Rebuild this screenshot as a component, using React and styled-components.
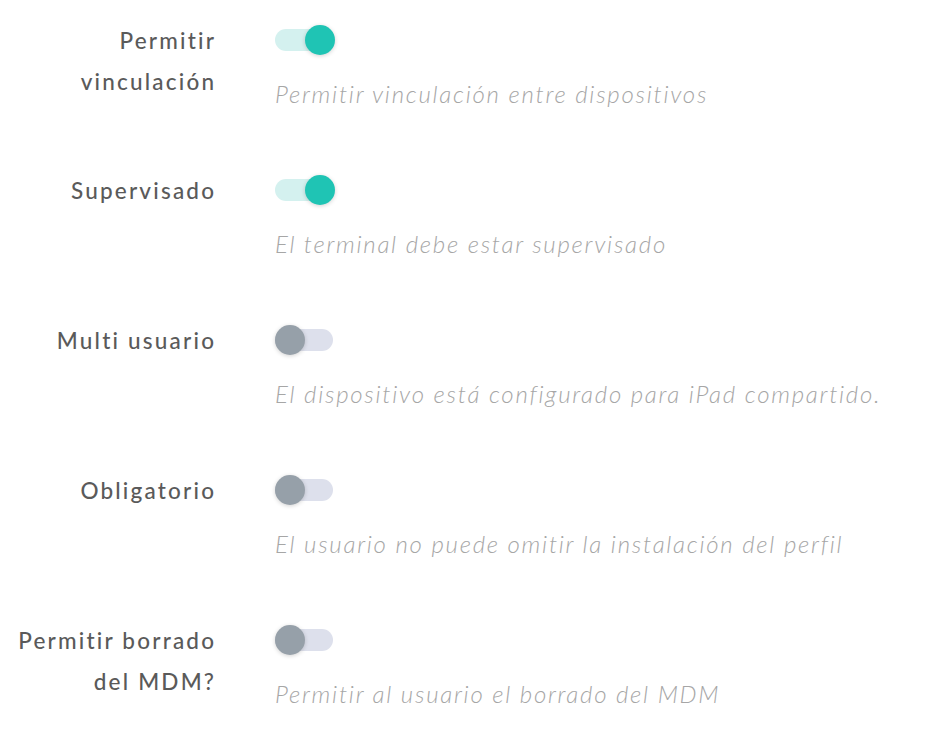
import React, { useState } from "react";
import styled, { createGlobalStyle } from "styled-components";

const Global = createGlobalStyle`
  html, body { margin: 0; padding: 0; background: #ffffff; }
  body { font-family: "Lato", "Noto Sans", sans-serif; }
`;

const Page = styled.div`
  display: flex;
  flex-direction: column;
  gap: 66.5px;
  padding-top: 25px;
  width: 926px;
  box-sizing: border-box;
`;

const Row = styled.div`
  display: grid;
  grid-template-columns: 214px auto;
  column-gap: 61px;
  align-items: start;
`;

const Label = styled.div`
  margin-top: -5.5px;
  margin-right: -2.2px;
  text-align: right;
  font-size: 22.5px;
  font-weight: 500;
  letter-spacing: 2.2px;
  line-height: 41px;
  color: #5a5a5a;
`;

const Control = styled.div`
  display: flex;
  flex-direction: column;
  align-items: flex-start;
`;

const Track = styled.button`
  position: relative;
  width: 60px;
  height: 30px;
  padding: 0;
  border: none;
  background: none;
  cursor: pointer;
  &::before {
    content: "";
    position: absolute;
    left: 0;
    top: 4px;
    width: 58px;
    height: 22px;
    border-radius: 11px;
    background: ${(p) => (p.$on ? "#d4f1ef" : "#dde0ec")};
  }
`;

const Knob = styled.span`
  position: absolute;
  top: 0;
  left: ${(p) => (p.$on ? "30px" : "0")};
  width: 30px;
  height: 30px;
  border-radius: 50%;
  background: ${(p) => (p.$on ? "#1fc4b4" : "#96a0a9")};
  box-shadow: 0 1px 4px rgba(0, 0, 0, 0.18);
`;

const Description = styled.div`
  margin-top: 23.5px;
  font-size: 24px;
  font-style: italic;
  font-weight: 300;
  letter-spacing: 1.74px;
  line-height: 30px;
  color: #a6a6a6;
  white-space: nowrap;
`;

const items = [
  { label: ["Permitir", "vinculación"], desc: "Permitir vinculación entre dispositivos", on: true },
  { label: ["Supervisado"], desc: "El terminal debe estar supervisado", on: true },
  { label: ["Multi usuario"], desc: "El dispositivo está configurado para iPad compartido.", on: false },
  { label: ["Obligatorio"], desc: "El usuario no puede omitir la instalación del perfil", on: false },
  { label: ["Permitir borrado", "del MDM?"], desc: "Permitir al usuario el borrado del MDM", on: false },
];

function Switch({ on, onToggle }) {
  return (
    <Track $on={on} onClick={onToggle} aria-pressed={on}>
      <Knob $on={on} />
    </Track>
  );
}

export default function App() {
  const [state, setState] = useState(items.map((i) => i.on));
  return (
    <>
      <Global />
      <Page>
        {items.map((it, idx) => (
          <Row key={idx}>
            <Label>
              {it.label.map((l, j) => (
                <div key={j}>{l}</div>
              ))}
            </Label>
            <Control>
              <Switch
                on={state[idx]}
                onToggle={() =>
                  setState((s) => s.map((v, k) => (k === idx ? !v : v)))
                }
              />
              <Description>{it.desc}</Description>
            </Control>
          </Row>
        ))}
      </Page>
    </>
  );
}
